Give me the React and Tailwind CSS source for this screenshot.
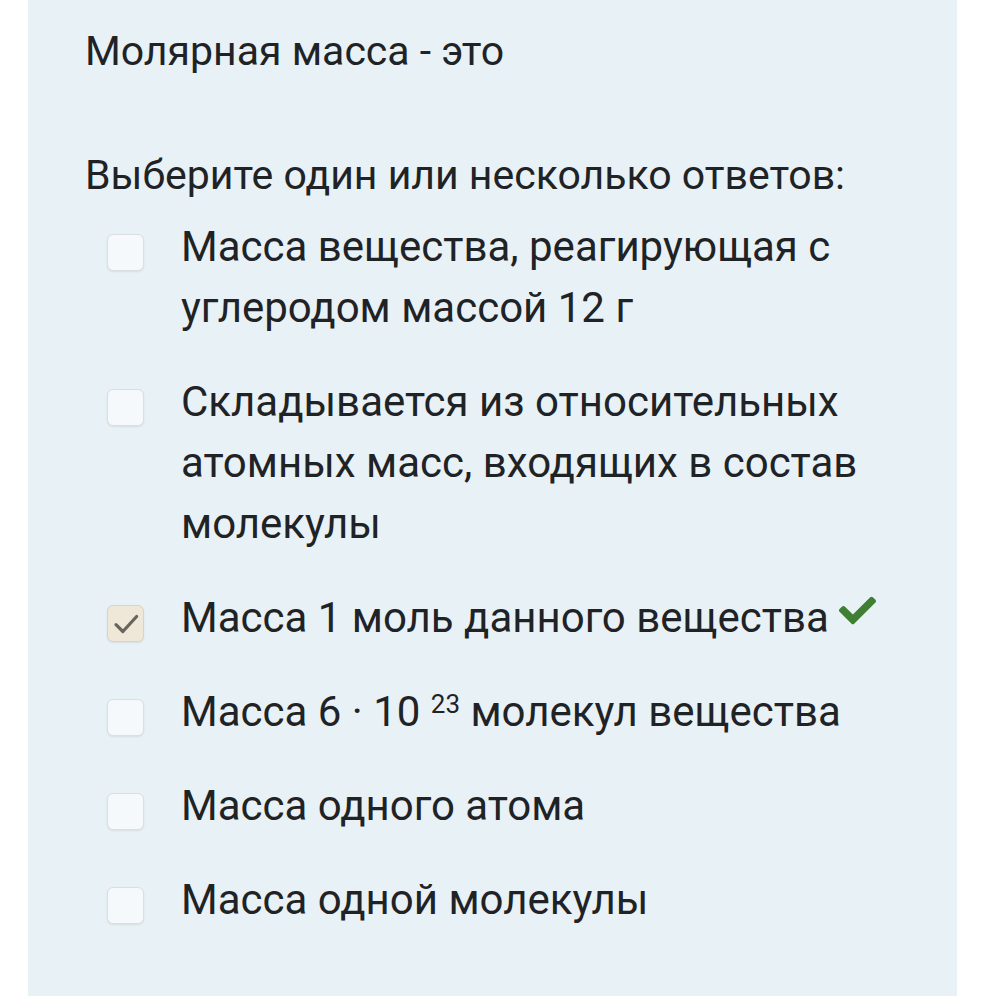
import React from "react";
import { FaCheck } from "react-icons/fa";

function Box({ checked }) {
  return (
    <div
      className={
        "mt-[18px] w-[37px] h-[37px] shrink-0 rounded-[6px] border flex items-center justify-center shadow-[0_1px_2px_rgba(0,0,0,0.08)] " +
        (checked ? "bg-[#efe8d8] border-[#dcd3c0]" : "bg-[#f6f9fb] border-[#d9dfe3]")
      }
    >
      {checked && (
        <svg viewBox="0 0 24 24" className="w-[30px] h-[30px]" fill="none" stroke="#66665f" strokeWidth="2.6" strokeLinecap="round" strokeLinejoin="round">
          <path d="M4 12.5l5.5 5.5L20.5 6" />
        </svg>
      )}
    </div>
  );
}

function Option({ checked, children }) {
  return (
    <div className="flex items-start pl-[22px]">
      <Box checked={checked} />
      <div className="ml-[37px] text-[42px] leading-[61px] text-[#1f2326] w-[700px]">{children}</div>
    </div>
  );
}

export default function App() {
  return (
    <div className="min-h-[996px] bg-white" style={{ fontFamily: "Roboto, 'Noto Sans', sans-serif" }}>
      <div className="ml-[28px] w-[929px] min-h-[996px] bg-[#e8f1f5] pl-[57px] pt-[21px]">
        <div className="text-[41px] leading-[60px] text-[#1f2326]">Молярная масса - это</div>
        <div className="mt-[64px] text-[41px] leading-[60px] text-[#1f2326]">Выберите один или несколько ответов:</div>
        <div className="mt-[11px] flex flex-col gap-[33px]">
          <Option>Масса вещества, реагирующая с углеродом массой 12 г</Option>
          <Option>Складывается из относительных атомных масс, входящих в состав молекулы</Option>
          <Option checked>
            <span className="whitespace-nowrap">
              Масса 1 моль данного вещества
              <FaCheck className="inline-block ml-[10px] w-[37px] h-[37px] align-[3px] text-[#3f7f33]" />
            </span>
          </Option>
          <Option>
            Масса 6 · 10 <sup className="text-[26px]">23</sup> молекул вещества
          </Option>
          <Option>Масса одного атома</Option>
          <Option>Масса одной молекулы</Option>
        </div>
      </div>
    </div>
  );
}
